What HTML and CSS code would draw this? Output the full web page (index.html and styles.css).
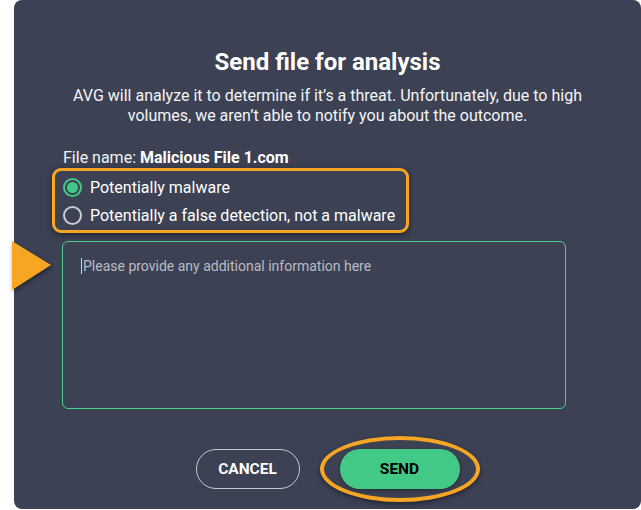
FILE: index.html
```html
<!DOCTYPE html>
<html lang="en">
<head>
<meta charset="utf-8">
<title>Send file for analysis</title>
<link rel="stylesheet" href="styles.css">
</head>
<body>
<div class="dialog">
  <h1 class="title">Send file for analysis</h1>
  <p class="desc">AVG will analyze it to determine if it’s a threat. Unfortunately, due to high volumes, we aren’t able to notify you about the outcome.</p>
  <div class="form">
    <div class="filename">File name: <b>Malicious File 1.com</b></div>
    <div class="radios">
      <label class="radio"><span class="dot checked"></span>Potentially malware</label>
      <label class="radio"><span class="dot"></span>Potentially a false detection, not a malware</label>
    </div>
    <div class="textarea-wrap">
      <div class="pointer"></div>
      <div class="textarea"><span class="caret"></span>Please provide any additional information here</div>
    </div>
  </div>
  <div class="buttons">
    <button class="btn cancel">CANCEL</button>
    <div class="send-wrap">
      <button class="btn send">SEND</button>
      <div class="ring"></div>
    </div>
  </div>
</div>
</body>
</html>
```

FILE: styles.css
```css
* { box-sizing: border-box; }
html, body { margin: 0; padding: 0; background: #ffffff; }
body {
  width: 641px;
  height: 510px;
  overflow: hidden;
  font-family: Roboto, "Liberation Sans", Arial, sans-serif;
}
.dialog {
  margin-left: 14px;
  width: 627px;
  height: 509px;
  background: #3c4153;
  border-radius: 8px;
  color: #ffffff;
  padding-top: 48px;
  display: flex;
  flex-direction: column;
  position: relative;
}
.title {
  margin: 0;
  font-size: 24px;
  line-height: 28px;
  font-weight: 700;
  text-align: center;
}
.desc {
  margin: 10px auto 0;
  width: 530px;
  font-size: 16px;
  line-height: 20px;
  text-align: center;
  color: #f4f5f7;
}
.form {
  padding-left: 48px;
  padding-right: 75px;
  margin-top: 23px;
}
.filename {
  padding-left: 1px;
  font-size: 16px;
  line-height: 18px;
  color: #f1f2f4;
}
.filename b { font-weight: 700; color: #fff; }
.radios {
  margin-top: 1px;
  margin-left: -10px;
  width: 357px;
  border: 3px solid #f6a623;
  border-radius: 9px;
  padding: 2px 8px 1px;
  box-shadow: 0 2px 6px rgba(0,0,0,0.45);
}
.radio {
  display: flex;
  align-items: center;
  height: 28px;
  font-size: 16px;
  color: #ffffff;
}
.dot {
  width: 19px;
  height: 19px;
  border-radius: 50%;
  border: 2px solid #c9ccd3;
  margin-right: 8px;
  flex: none;
  display: flex;
  align-items: center;
  justify-content: center;
}
.dot.checked { border-color: #43c987; }
.dot.checked::after {
  content: "";
  width: 11px;
  height: 11px;
  border-radius: 50%;
  background: #43c987;
}
.textarea-wrap {
  position: relative;
  margin-top: 8px;
}
.textarea {
  height: 168px;
  border: 1px solid #46d08c;
  border-radius: 6px;
  padding: 15px 18px;
  font-size: 14px;
  line-height: 18px;
  color: #b9bcc4;
}
.caret {
  display: inline-block;
  width: 1px;
  height: 16px;
  background: #d0d2d8;
  vertical-align: -3px;
  margin-right: 1px;
}
.pointer {
  position: absolute;
  left: -50px;
  top: 0;
  width: 0;
  height: 0;
  border-top: 24px solid transparent;
  border-bottom: 25px solid transparent;
  border-left: 39px solid #f6a623;
  filter: drop-shadow(1px 2px 2px rgba(0,0,0,0.45));
}
.buttons {
  margin-top: 40px;
  display: flex;
  justify-content: center;
  gap: 40px;
}
.btn {
  font-family: Roboto, "Liberation Sans", Arial, sans-serif;
  font-weight: 700;
  font-size: 15.5px;
  border-radius: 20px;
  height: 40px;
  cursor: pointer;
}
.cancel {
  width: 104px;
  background: transparent;
  border: 1px solid #c6c9d0;
  color: #ffffff;
}
.send-wrap { position: relative; }
.send {
  width: 120px;
  background: #43c987;
  border: none;
  color: #000000;
  box-shadow: 0 2px 4px rgba(0,0,0,0.3);
}
.ring {
  position: absolute;
  left: -20px;
  top: -13px;
  width: 160px;
  height: 66px;
  border: 4px solid #f6a623;
  border-radius: 50%;
  box-shadow: 0 2px 5px rgba(0,0,0,0.45);
  pointer-events: none;
}
```
